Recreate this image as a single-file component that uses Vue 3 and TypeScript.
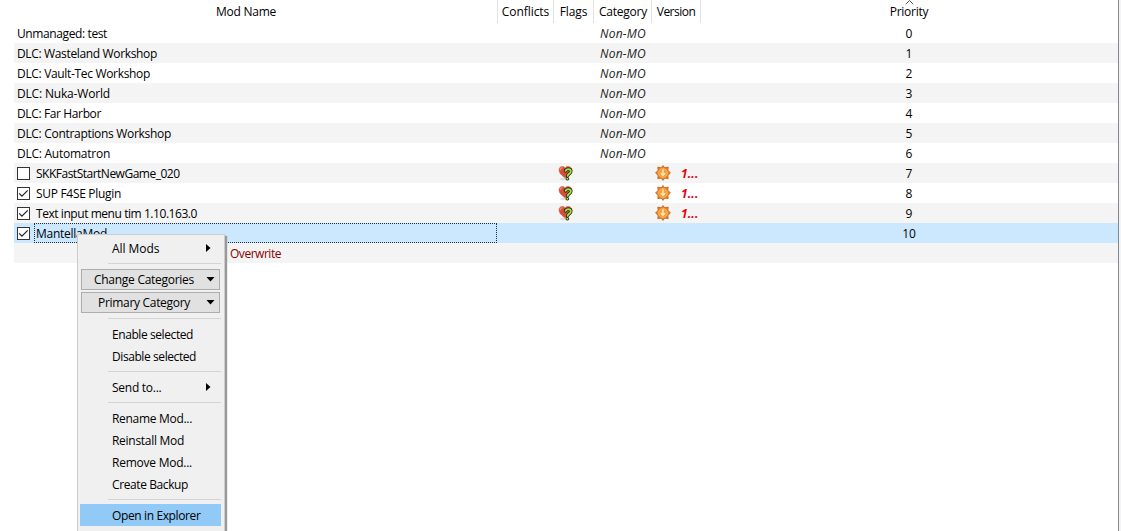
<script setup lang="ts">
import type { Directive } from 'vue'

interface Mod {
  name: string
  width: number
  managed: boolean
  checked?: boolean
  selected?: boolean
  outdated?: boolean
}

interface Entry {
  kind: 'item' | 'sub' | 'sep' | 'button'
  label?: string
  width?: number
  active?: boolean
}

const mods: Mod[] = [
  { name: 'Unmanaged: test', width: 90, managed: false },
  { name: 'DLC: Wasteland Workshop', width: 140, managed: false },
  { name: 'DLC: Vault-Tec Workshop', width: 133, managed: false },
  { name: 'DLC: Nuka-World', width: 93, managed: false },
  { name: 'DLC: Far Harbor', width: 84, managed: false },
  { name: 'DLC: Contraptions Workshop', width: 154, managed: false },
  { name: 'DLC: Automatron', width: 93, managed: false },
  { name: 'SKKFastStartNewGame_020', width: 143.5, managed: true, outdated: true },
  { name: 'SUP F4SE Plugin', width: 85, managed: true, checked: true, outdated: true },
  { name: 'Text input menu tim 1.10.163.0', width: 161, managed: true, checked: true, outdated: true },
  { name: 'MantellaMod', width: 71, managed: true, checked: true, selected: true },
]

const entries: Entry[] = [
  { kind: 'sub', label: 'All Mods', width: 47.5 },
  { kind: 'sep' },
  { kind: 'button', label: 'Change Categories', width: 100 },
  { kind: 'button', label: 'Primary Category', width: 92 },
  { kind: 'sep' },
  { kind: 'item', label: 'Enable selected', width: 81 },
  { kind: 'item', label: 'Disable selected', width: 84 },
  { kind: 'sep' },
  { kind: 'sub', label: 'Send to...', width: 49.5 },
  { kind: 'sep' },
  { kind: 'item', label: 'Rename Mod...', width: 80 },
  { kind: 'item', label: 'Reinstall Mod', width: 72 },
  { kind: 'item', label: 'Remove Mod...', width: 80 },
  { kind: 'item', label: 'Create Backup', width: 76 },
  { kind: 'sep' },
  { kind: 'item', label: 'Open in Explorer', width: 88.5, active: true },
  { kind: 'item' },
]

// Tracks a label so that it occupies the given width.
const vFit: Directive<HTMLElement, number | undefined> = {
  mounted(el, { value }) {
    const count = el.textContent?.length ?? 0
    if (!value || !count) return
    const spacing = (value - el.getBoundingClientRect().width) / count
    el.style.letterSpacing = `${spacing.toFixed(3)}px`
  },
}
</script>

<template>
  <div class="window">
    <div class="list">
      <div class="grid header">
        <div class="cell"><span v-fit="60">Mod Name</span></div>
        <div class="cell"><span v-fit="47.5">Conflicts</span></div>
        <div class="cell"><span v-fit="27.5">Flags</span></div>
        <div class="cell category-head"><span v-fit="48">Category</span></div>
        <div class="cell"><span v-fit="38.5">Version</span></div>
        <div class="cell last">
          <svg class="sort" width="9" height="5" viewBox="0 0 9 5"><path d="M.7 4.3 4.5.5l3.8 3.8" fill="none" stroke="#555" /></svg>
          <span v-fit="38.5">Priority</span>
        </div>
      </div>

      <div v-for="(mod, i) in mods" :key="mod.name" class="grid row" :class="{ alt: i % 2 === 1, selected: mod.selected }">
        <div class="name">
          <span v-if="mod.managed" class="box">
            <svg v-if="mod.checked" width="11" height="11" viewBox="0 0 11 11"><path d="m1.2 5.4 2.7 2.8 5.8-5.9" fill="none" stroke="#222" stroke-width="1.2" /></svg>
          </span>
          <span class="label" :class="{ focus: mod.selected }"><span v-fit="mod.width">{{ mod.name }}</span></span>
        </div>
        <div></div>
        <div class="flag">
          <svg v-if="mod.outdated" width="16" height="16" viewBox="0 0 16 16">
            <ellipse cx="7" cy="14" rx="5" ry="1.2" fill="#ccc" opacity=".6" />
            <path d="M7 13C4.3 10.6 1 8.5 1 5 1 2.8 2.5 1.4 4.3 1.4c1.3 0 2.3.6 2.8 1.5.6-.9 1.6-1.5 2.9-1.5 2 0 3.9 1.4 3.9 3.6 0 3.5-4.1 5.8-6.9 8Z" fill="#d54f38" stroke="#c0604a" stroke-width=".5" />
            <path d="M2.4 5.2c0-1.8 1-2.5 2.2-2.5" fill="none" stroke="#e88b76" stroke-width="1.2" />
            <path d="M7.5 5.9C8.1 3.7 12.9 3.6 12.8 6.4c0 2.1-2.9 2.2-3.2 4.5M9.3 13.8h.1" fill="none" stroke="#172008" stroke-width="3.4" stroke-linecap="round" stroke-linejoin="round" />
            <path d="M7.5 5.9C8.1 3.7 12.9 3.6 12.8 6.4c0 2.1-2.9 2.2-3.2 4.5M9.3 13.8h.1" fill="none" stroke="#a9dc3c" stroke-width="1.9" stroke-linecap="round" />
          </svg>
        </div>
        <div class="category"><span v-if="!mod.managed" v-fit="46">Non-MO</span></div>
        <div class="version">
          <template v-if="mod.outdated">
            <svg width="16" height="16" viewBox="0 0 16 16">
              <path d="m8 .6 1.7 2.2 3.5-.7-.4 3.1L15.4 8l-2.6 2.4.4 3.2-3.5-.5L8 15.4l-1.7-2.3-3.5.5.4-3.2L.6 8l2.6-2.8-.4-3.1 3.5.7Z" fill="#ea8428" stroke="#c4661f" stroke-width=".9" stroke-linejoin="round" />
              <circle cx="8" cy="8" r="4.4" fill="#f6a03c" stroke="#ffbf70" stroke-width=".7" />
              <path d="M8 4.6v5.6M5.9 8.2 8 10.3l2.1-2.1" fill="none" stroke="#ffedc0" stroke-width="1.4" />
            </svg>
            <span v-fit="17.5">1...</span>
          </template>
        </div>
        <div class="priority">{{ i }}</div>
      </div>

      <div class="row overwrite alt"><span v-fit="51">Overwrite</span></div>
    </div>
    <div class="edge"></div>

    <div class="menu">
      <template v-for="(entry, i) in entries" :key="i">
        <div v-if="entry.kind === 'sep'" class="sep"></div>
        <div v-else-if="entry.kind === 'button'" class="button">
          <span v-fit="entry.width">{{ entry.label }}</span>
          <svg class="down" width="9" height="5" viewBox="0 0 9 5"><path d="M.5 0h8L4.5 4.6Z" fill="#000" /></svg>
        </div>
        <div v-else class="item" :class="{ active: entry.active }">
          <span v-fit="entry.width">{{ entry.label }}</span>
          <svg v-if="entry.kind === 'sub'" class="right" width="5" height="8" viewBox="0 0 5 8"><path d="M0 0v8l4.5-4Z" fill="#000" /></svg>
        </div>
      </template>
    </div>
  </div>
</template>

<style>
html,
body {
  margin: 0;
  overflow: hidden;
  background: #fff;
}
</style>

<style scoped>
.window {
  position: relative;
  display: flex;
  width: 1121px;
  height: 531px;
  overflow: hidden;
  box-sizing: border-box;
  background: #fff;
  color: #000;
  font: 12px/20px 'Open Sans', 'Noto Sans', sans-serif;
  white-space: nowrap;
}
.list {
  flex: none;
  width: 1104px;
  padding-left: 14px;
}
.edge {
  flex: 1;
  border-left: 1px solid #828790;
  background: #f4f4f4;
}
.grid {
  display: grid;
  grid-template-columns: 484px 56px 40px 58px 49px 417px;
}
.header {
  height: 23px;
  line-height: 24px;
}
.cell {
  position: relative;
  box-sizing: border-box;
  height: 23px;
  border-right: 1px solid #e2e2e2;
  text-align: center;
}
.cell:first-child {
  padding-right: 19px;
}
.cell.category-head {
  padding-left: 1px;
}
.cell.last {
  padding-right: 1px;
  border-right: 0;
}
.sort {
  position: absolute;
  top: 0;
  left: 204px;
}
.row {
  height: 20px;
  line-height: 21px;
}
.alt {
  background: #f4f4f4;
}
.selected {
  background: #cce8ff;
}
.name {
  display: flex;
  align-items: flex-start;
  height: 20px;
  padding-left: 3px;
}
.box {
  box-sizing: border-box;
  display: flex;
  width: 13px;
  height: 13px;
  margin: 4px 4px 0 0;
  border: 1px solid #333;
  background: #fff;
}
.label {
  box-sizing: border-box;
  height: 20px;
  padding-left: 2px;
}
.name > .label:first-child {
  padding-left: 0;
}
.label.focus {
  flex: 1;
  margin-right: 1px;
  padding-left: 1px;
  border: 1px dotted #17304a;
  line-height: 19px;
}
.flag {
  display: flex;
  align-items: flex-start;
  padding: 2px 0 0 4px;
}
.category {
  padding-left: 6px;
  color: #222;
  font-style: italic;
}
.version {
  display: flex;
  align-items: flex-start;
  padding-left: 3px;
  gap: 10px;
  color: #e8000c;
  font-weight: 700;
  font-style: italic;
}
.version svg {
  margin-top: 2px;
}
.priority {
  padding-right: 1px;
  text-align: center;
}
.overwrite {
  padding-left: 216px;
  color: #8b0000;
}
.menu {
  position: absolute;
  top: 234px;
  left: 77px;
  box-sizing: border-box;
  width: 148px;
  padding: 2px 3px 0 2px;
  border: 1px solid #ccc;
  background: #f0f0f0;
  box-shadow: 2px 2px 1px #999;
}
.item {
  position: relative;
  height: 22px;
  padding-left: 32px;
  line-height: 23px;
}
.item.active {
  background: #91c9f7;
}
.sep {
  height: 1px;
  margin: 4px 0 4px 28px;
  background: #d4d4d4;
}
.item:first-child + .sep {
  margin-bottom: 5px;
}
.button + .sep {
  margin-top: 5px;
}
.button {
  position: relative;
  box-sizing: border-box;
  height: 21px;
  margin: 0 1px 2px;
  padding-right: 13px;
  border: 1px solid #adadad;
  background: #e1e1e1;
  line-height: 20px;
  text-align: center;
}
.right {
  position: absolute;
  top: 7px;
  left: 126px;
}
.down {
  position: absolute;
  top: 7px;
  right: 4px;
}
</style>
